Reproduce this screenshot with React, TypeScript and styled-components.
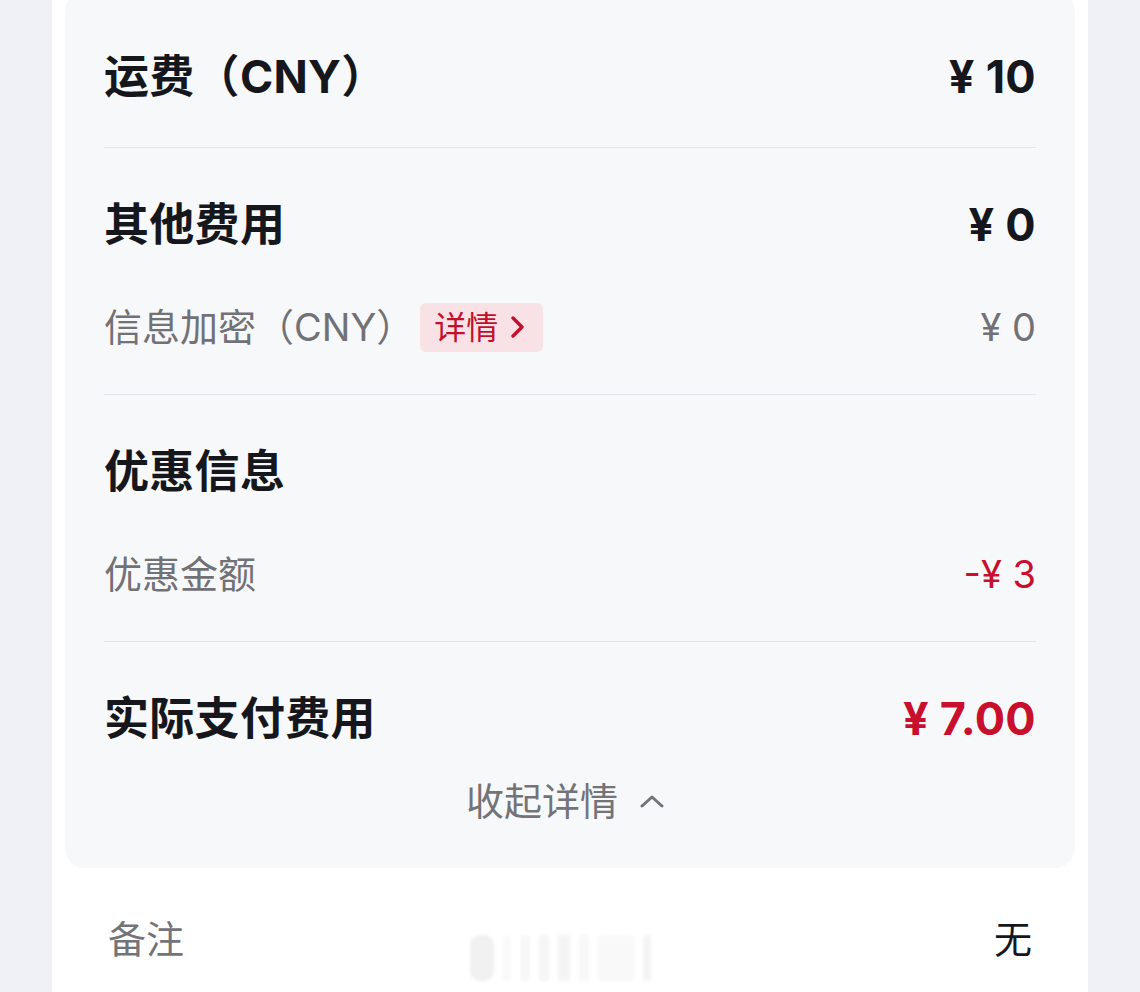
import React from "react";
import styled, { createGlobalStyle } from "styled-components";

const Global = createGlobalStyle`
  html, body { margin: 0; padding: 0; background: #f0f1f6; }
  body { font-family: "Inter", "Noto Sans CJK SC", sans-serif; -webkit-font-smoothing: antialiased; }
  * { box-sizing: border-box; }
`;

const Page = styled.div`
  height: 992px;
  overflow: hidden;
  background: #f0f1f6;
  padding: 0 52px;
`;

const Card = styled.div`
  display: flow-root;
  background: #ffffff;
  height: 100%;
  padding: 0 13px;
`;

const Panel = styled.div`
  margin-top: -8px;
  background: #f7f8fa;
  border-radius: 20px;
  padding: 0 39px;
`;

const Section = styled.div<{ $top?: number; $bottom?: number; $divider?: boolean }>`
  padding-top: ${(p) => p.$top ?? 46}px;
  padding-bottom: ${(p) => p.$bottom ?? 41}px;
  border-bottom: ${(p) => (p.$divider ? "1px solid #e4e5ea" : "none")};
  display: flex;
  flex-direction: column;
  gap: 45px;
`;

const Row = styled.div`
  display: flex;
  align-items: center;
  justify-content: space-between;
`;

const Title = styled.div<{ $color?: string }>`
  font-size: 45px;
  line-height: 62px;
  font-weight: 700;
  color: ${(p) => p.$color ?? "#15171c"};
  letter-spacing: 0.3px;
`;

const Sub = styled.div<{ $color?: string }>`
  font-size: 38px;
  line-height: 52px;
  font-weight: 400;
  color: ${(p) => p.$color ?? "#717176"};
  display: flex;
  align-items: center;
`;

const Badge = styled.span`
  display: inline-flex;
  align-items: center;
  gap: 12px;
  height: 49px;
  margin-left: 6px;
  padding: 0 18px 0 14px;
  border-radius: 6px;
  background: #f9e2e6;
  color: #c30f2c;
  font-size: 32px;
  line-height: 49px;
`;

const Collapse = styled.div`
  margin-top: -20px;
  display: flex;
  justify-content: center;
  align-items: center;
  gap: 22px;
  font-size: 38px;
  line-height: 52px;
  color: #737378;
  padding-right: 10px;
`;

const Remark = styled.div`
  position: relative;
  margin-top: 45px;
  padding: 0 43px;
  display: flex;
  justify-content: space-between;
  align-items: center;
  font-size: 38px;
  line-height: 52px;
`;

const RemarkLabel = styled.span`
  color: #737378;
`;

const RemarkValue = styled.span`
  color: #15171c;
`;

const Ghost = styled.div`
  position: absolute;
  left: 405px;
  top: 22px;
  width: 208px;
  height: 46px;
  display: flex;
  align-items: stretch;
  gap: 9px;
  filter: blur(1.5px);
  opacity: 0.5;
  pointer-events: none;
`;

const GhostBar = styled.div<{ $w: number; $o: number; $r?: number }>`
  width: ${(p) => p.$w}px;
  background: rgba(160, 160, 170, ${(p) => p.$o});
  border-radius: ${(p) => p.$r ?? 3}px;
`;

const red = "#c8102e";

export default function App() {
  return (
    <>
      <Global />
      <Page>
        <Card>
          <Panel>
            <Section $top={54} $bottom={39} $divider>
              <Row>
                <Title>运费（CNY）</Title>
                <Title>¥ 10</Title>
              </Row>
            </Section>
            <Section $divider>
              <Row>
                <Title>其他费用</Title>
                <Title>¥ 0</Title>
              </Row>
              <Row>
                <Sub>
                  信息加密（CNY）
                  <Badge>
                    详情
                    <svg width="15" height="22" viewBox="0 0 15 22" fill="none">
                      <polyline points="3,2 12,11 3,20" stroke="#c30f2c" strokeWidth="3.4" strokeLinecap="round" strokeLinejoin="round" />
                    </svg>
                  </Badge>
                </Sub>
                <Sub>¥ 0</Sub>
              </Row>
            </Section>
            <Section $divider>
              <Row>
                <Title>优惠信息</Title>
              </Row>
              <Row>
                <Sub>优惠金额</Sub>
                <Sub $color={red}>-¥ 3</Sub>
              </Row>
            </Section>
            <Section>
              <Row>
                <Title>实际支付费用</Title>
                <Title $color={red}>¥ 7.00</Title>
              </Row>
              <Collapse>
                收起详情
                <svg width="24" height="14" viewBox="0 0 24 14" fill="none">
                  <polyline points="2,12 12,3 22,12" stroke="#737378" strokeWidth="3" strokeLinecap="round" strokeLinejoin="round" />
                </svg>
              </Collapse>
            </Section>
          </Panel>
          <Remark>
            <RemarkLabel>备注</RemarkLabel>
            <RemarkValue>无</RemarkValue>
            <Ghost>
              <GhostBar $w={24} $o={0.3} $r={10} />
              <GhostBar $w={8} $o={0.12} />
              <GhostBar $w={10} $o={0.16} />
              <GhostBar $w={10} $o={0.2} />
              <GhostBar $w={12} $o={0.22} />
              <GhostBar $w={10} $o={0.16} />
              <GhostBar $w={36} $o={0.12} />
              <GhostBar $w={8} $o={0.22} />
            </Ghost>
          </Remark>
        </Card>
      </Page>
    </>
  );
}
